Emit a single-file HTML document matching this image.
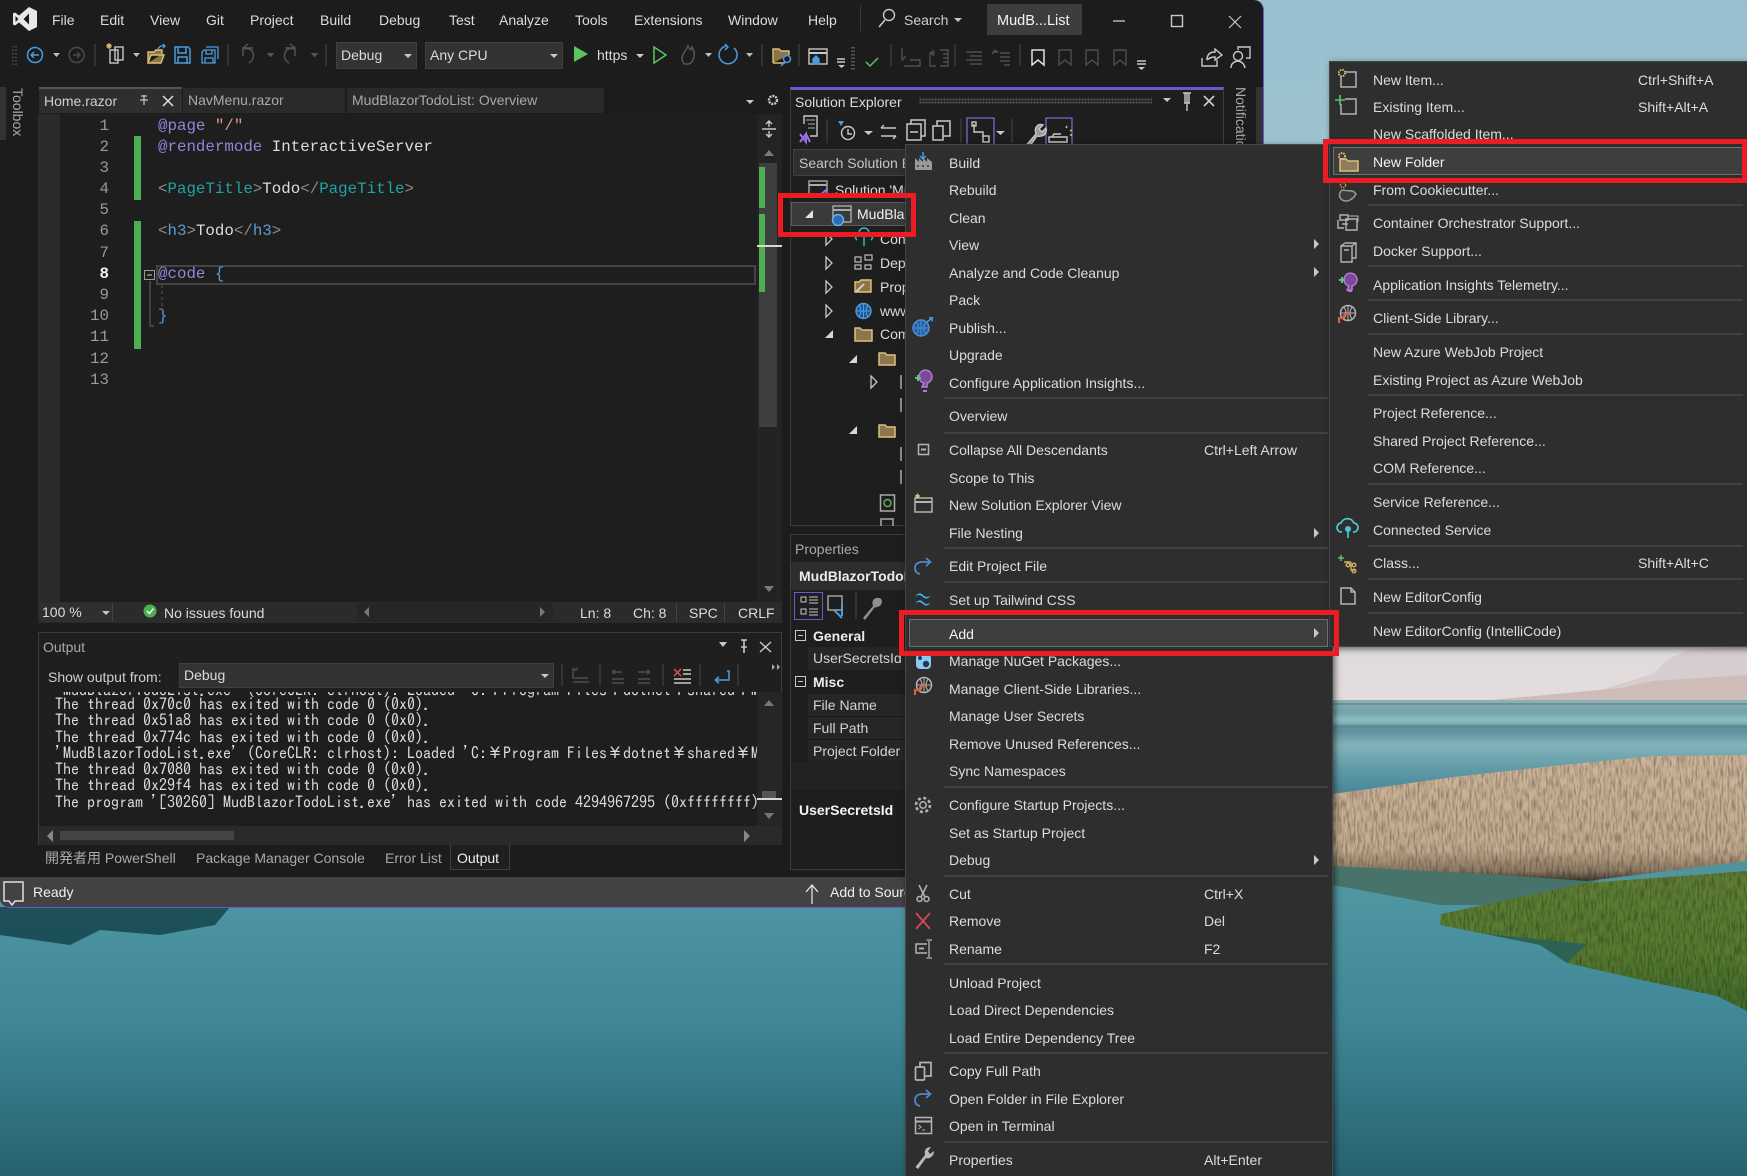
<!DOCTYPE html>
<html lang="en"><head><meta charset="utf-8"><title>Visual Studio</title>
<style>
html,body{margin:0;padding:0;width:1747px;height:1176px;overflow:hidden;background:#2a6a7c}
*{box-sizing:border-box}
#p{position:relative;width:1747px;height:1176px;overflow:hidden;font:14px "Liberation Sans","Noto Sans CJK JP",sans-serif;color:#dcdcdc}
.a{position:absolute}
.t{position:absolute;white-space:nowrap;line-height:18px;font-size:14px}
.g{color:#a9a9a9}
.b{font-weight:bold;color:#ececec}
.c{position:absolute;white-space:pre;font:15.8px/21px "Liberation Mono",monospace;color:#dcdcdc}
.n{position:absolute;right:0;width:30px;text-align:right;font:15.8px/21px "Liberation Mono",monospace;color:#9a9a9a}
.pu{color:#8f86dc}.st{color:#d69d85}.te{color:#1fa3a3}.br{color:#8a8a8a}.bl{color:#569cd6}
.o{position:absolute;left:0;white-space:pre;font:16px/16px "IPAGothic","Liberation Mono",monospace;color:#dcdcdc}
.sep{position:absolute;height:2px;background:#414141}
.m{position:absolute;background:#2e2e2e;border:1px solid #474747;box-shadow:2px 2px 6px rgba(0,0,0,.55)}
.hl{position:absolute;background:#3e3e3e;border:1.5px solid #6f6f6f}
.rb{position:absolute;border:solid #ec1c24;border-width:5px}
.ar{position:absolute;width:0;height:0;border-left:5px solid #c8c8c8;border-top:5px solid transparent;border-bottom:5px solid transparent}
.dn{position:absolute;width:0;height:0;border-top:4px solid #c8c8c8;border-left:4px solid transparent;border-right:4px solid transparent}
.v{position:absolute;width:1px;background:#3a3a3a}
.cb{position:absolute;background:#333;border:1px solid #3f3f3f}
</style></head><body><div id="p">

<svg class="a" style="left:0;top:0" width="1747" height="1176" viewBox="0 0 1747 1176">
<defs>
<linearGradient id="sk" x1="0" y1="0" x2="0" y2="1"><stop offset="0" stop-color="#97bfce"/><stop offset=".3" stop-color="#a0c4d1"/><stop offset=".8" stop-color="#d6d8da"/><stop offset="1" stop-color="#e4dcdc"/></linearGradient>
<linearGradient id="wb" x1="0" y1="0" x2="0" y2="1"><stop offset="0" stop-color="#8fb1b6"/><stop offset=".12" stop-color="#72a2ab"/><stop offset=".2" stop-color="#8ebfc1"/><stop offset=".3" stop-color="#5d8e9d"/><stop offset=".45" stop-color="#83b3b8"/><stop offset=".7" stop-color="#5f9aa6"/><stop offset="1" stop-color="#3f7f98"/></linearGradient>
<linearGradient id="wa" x1="0" y1="0" x2="0" y2="1"><stop offset="0" stop-color="#56868a"/><stop offset=".25" stop-color="#4f97a2"/><stop offset=".6" stop-color="#3f8797"/><stop offset="1" stop-color="#28626f"/></linearGradient>
<linearGradient id="be" x1="0" y1="0" x2="0" y2="1"><stop offset="0" stop-color="#cdb59a"/><stop offset=".75" stop-color="#c3ab8e"/><stop offset=".92" stop-color="#8c7a63"/><stop offset="1" stop-color="#3e3a2e"/></linearGradient>
<linearGradient id="gr" x1="0" y1="0" x2="0" y2="1"><stop offset="0" stop-color="#5f7f36"/><stop offset=".6" stop-color="#577a30"/><stop offset="1" stop-color="#3f6a2c"/></linearGradient>
<filter id="tx" x="0" y="0" width="100%" height="100%"><feTurbulence type="fractalNoise" baseFrequency=".5 .09" numOctaves="2" seed="4"/><feColorMatrix values="0 0 0 0 0  0 0 0 0 0  0 0 0 0 0  0 0 0 1.4 -.55"/><feComposite in2="SourceGraphic" operator="in"/></filter>
</defs>
<rect width="1747" height="702" fill="url(#sk)"/>
<path d="M1600 690 1653 674 1667 660 1687 650 1747 646V690Z" fill="#d8cdce"/>
<path d="M1470 702 1620 688 1653 681 1747 675V704H1470Z" fill="#cdbcb8"/>
<rect y="700" width="1747" height="100" fill="url(#wb)"/>
<rect y="703" width="1747" height="2" fill="#6f8f98"/><rect y="725" width="1747" height="3" fill="#5f8595" opacity=".8"/>
<rect y="790" width="1747" height="386" fill="url(#wa)"/>
<path d="M0 907H230L215 925 160 935 100 930 70 945 0 935Z" fill="#0e3a40" opacity=".75"/>
<path d="M1333 860 1600 880 1520 905 1440 905 1333 885Z" fill="#48736a"/>
<path id="bg1" d="M1333 794 1453 777 1553 766 1653 756 1747 755V861L1587 881 1487 874 1333 866Z" fill="url(#be)"/>
<path d="M1333 794 1453 777 1553 766 1653 756 1747 755V861L1587 881 1487 874 1333 866Z" fill="#5d4c38" filter="url(#tx)" opacity=".5"/>
<path d="M1441 914 1587 883 1747 871V1011L1717 996 1637 979 1567 963 1587 944 1487 934 1440 925Z" fill="url(#gr)"/>
<path d="M1441 914 1587 883 1747 871V1011L1717 996 1637 979 1567 963 1587 944 1487 934 1440 925Z" fill="#2c4a1c" filter="url(#tx)" opacity=".5"/>
<path d="M1445 926 1487 934 1587 944 1567 963 1540 945Z" fill="#27553f" opacity=".8"/>
</svg>

<!-- window -->
<div class="a" style="left:0;top:0;width:1264px;height:908px;background:#1c1c1d;border-right:1.5px solid #6a5ad0;border-bottom:1.5px solid #6a5ad0;border-radius:0 10px 0 10px;overflow:hidden">

<div class="a" style="left:0;top:877px;width:1264px;height:30px;background:#424242"></div>
</div>

<!-- menu bar -->
<div class="t" style="left:52px;top:11px">File</div><div class="t" style="left:100px;top:11px">Edit</div><div class="t" style="left:150px;top:11px">View</div><div class="t" style="left:206px;top:11px">Git</div><div class="t" style="left:250px;top:11px">Project</div><div class="t" style="left:320px;top:11px">Build</div><div class="t" style="left:379px;top:11px">Debug</div><div class="t" style="left:449px;top:11px">Test</div><div class="t" style="left:499px;top:11px">Analyze</div><div class="t" style="left:575px;top:11px">Tools</div><div class="t" style="left:634px;top:11px">Extensions</div><div class="t" style="left:728px;top:11px">Window</div><div class="t" style="left:808px;top:11px">Help</div>
<div class="v" style="left:860px;top:5px;height:26px"></div>
<div class="t" style="left:904px;top:11px;color:#cfcfcf">Search</div><div class="dn" style="left:954px;top:18px"></div>
<div class="a" style="left:987px;top:4px;width:95px;height:31px;background:#3d3d3d"></div>
<div class="t" style="left:997px;top:12px;color:#f4f4f4;font-size:14.5px">MudB...List</div>

<!-- toolbar combos -->
<div class="cb" style="left:336px;top:42px;width:81px;height:27px"></div><div class="t" style="left:341px;top:46px">Debug</div><div class="dn" style="left:404px;top:54px"></div>
<div class="cb" style="left:425px;top:42px;width:138px;height:27px"></div><div class="t" style="left:430px;top:46px">Any CPU</div><div class="dn" style="left:550px;top:54px"></div>
<div class="t" style="left:597px;top:46px">https</div><div class="dn" style="left:636px;top:54px"></div>

<!-- toolbox -->
<div class="a" style="left:0;top:87px;width:6px;height:53px;background:#333"></div>
<div class="t g" style="left:9px;top:88px;writing-mode:vertical-rl;line-height:18px">Toolbox</div>

<!-- doc tabs -->
<div class="a" style="left:39px;top:87px;width:143px;height:26px;background:#2e2e2e;border-top:2px solid #555"></div>
<div class="a" style="left:183px;top:88px;width:162px;height:25px;background:#2a2a2a"></div>
<div class="a" style="left:347px;top:88px;width:257px;height:25px;background:#2a2a2a"></div>
<div class="t" style="left:44px;top:92px;color:#cfcfcf">Home.razor</div>
<div class="t g" style="left:188px;top:91px">NavMenu.razor</div>
<div class="t g" style="left:352px;top:91px">MudBlazorTodoList: Overview</div>
<div class="dn" style="left:746px;top:100px"></div>

<!-- editor -->
<div class="a" style="left:38px;top:114px;width:744px;height:488px;background:#1e1e1e"></div>
<div class="a" style="left:38px;top:114px;width:22px;height:488px;background:#2b2b2b"></div>
<div class="a" style="left:757px;top:114px;width:25px;height:488px;background:#232323"></div>
<div class="a" style="left:759px;top:163px;width:18px;height:264px;background:#3e3e3e"></div>
<div class="a" style="left:759px;top:167px;width:6px;height:41px;background:#4caf50"></div>
<div class="a" style="left:759px;top:214px;width:6px;height:78px;background:#4caf50"></div>
<div class="a" style="left:757px;top:245px;width:25px;height:2px;background:#d8d8d8"></div>
<div class="a" style="left:134px;top:136px;width:7px;height:64px;background:#4caf50"></div>
<div class="a" style="left:134px;top:221px;width:7px;height:128px;background:#4caf50"></div>
<div class="a" style="left:156px;top:265px;width:600px;height:20px;border:2px solid #444"></div>
<div class="a" style="left:38px;top:115px;width:71px;height:280px">
<div class="n" style="top:1px">1</div><div class="n" style="top:22px">2</div><div class="n" style="top:43px">3</div><div class="n" style="top:64px">4</div><div class="n" style="top:85px">5</div><div class="n" style="top:106px">6</div><div class="n" style="top:128px">7</div><div class="n" style="top:149px;color:#f0f0f0;font-weight:bold">8</div><div class="n" style="top:170px">9</div><div class="n" style="top:191px">10</div><div class="n" style="top:212px">11</div><div class="n" style="top:234px">12</div><div class="n" style="top:255px">13</div>
</div>
<div class="c" style="left:158px;top:116px"><span class="pu">@page</span> <span class="st">"/"</span></div>
<div class="c" style="left:158px;top:137px"><span class="pu">@rendermode</span> InteractiveServer</div>
<div class="c" style="left:158px;top:179px"><span class="br">&lt;</span><span class="te">PageTitle</span><span class="br">&gt;</span>Todo<span class="br">&lt;/</span><span class="te">PageTitle</span><span class="br">&gt;</span></div>
<div class="c" style="left:158px;top:221px"><span class="br">&lt;</span><span class="bl">h3</span><span class="br">&gt;</span>Todo<span class="br">&lt;/</span><span class="bl">h3</span><span class="br">&gt;</span></div>
<div class="c" style="left:158px;top:264px"><span class="pu">@code</span> <span class="bl">{</span></div>
<div class="c" style="left:158px;top:306px"><span class="bl">}</span></div>

<!-- editor status -->
<div class="a" style="left:38px;top:602px;width:744px;height:21px;background:#2b2b2b"></div>
<div class="a" style="left:40px;top:603px;width:73px;height:19px;background:#2f2f2f;border-right:1px solid #444"></div>
<div class="a" style="left:357px;top:603px;width:196px;height:19px;background:#262626"></div>
<div class="a" style="left:676px;top:603px;width:1px;height:19px;background:#444"></div><div class="a" style="left:724px;top:603px;width:1px;height:19px;background:#444"></div>
<div class="t" style="left:42px;top:603px">100 %</div><div class="dn" style="left:102px;top:611px"></div>
<div class="t" style="left:164px;top:604px">No issues found</div>
<div class="t" style="left:580px;top:604px">Ln: 8</div><div class="t" style="left:633px;top:604px">Ch: 8</div><div class="t" style="left:689px;top:604px">SPC</div><div class="t" style="left:738px;top:604px">CRLF</div>

<!-- output -->
<div class="a" style="left:38px;top:632px;width:744px;height:213px;border:1px solid #3c3c3c;background:#1f1f1f"></div>
<div class="t g" style="left:43px;top:638px">Output</div>
<div class="t" style="left:48px;top:668px;color:#d0d0d0">Show output from:</div>
<div class="cb" style="left:179px;top:663px;width:375px;height:25px"></div>
<div class="t" style="left:184px;top:666px">Debug</div><div class="dn" style="left:541px;top:674px"></div>
<div class="a" style="left:39px;top:692px;width:718px;height:134px;background:#1e1e1e;overflow:hidden;color:#ddd">
<div class="o" style="left:16px;top:-10px">'MudBlazorTodoList.exe' (CoreCLR: clrhost): Loaded 'C:¥Program Files¥dotnet¥shared¥Micro</div>
<div class="o" style="left:16px;top:4px">The thread 0x70c0 has exited with code 0 (0x0).</div>
<div class="o" style="left:16px;top:20px">The thread 0x51a8 has exited with code 0 (0x0).</div>
<div class="o" style="left:16px;top:37px">The thread 0x774c has exited with code 0 (0x0).</div>
<div class="o" style="left:16px;top:53px">'MudBlazorTodoList.exe' (CoreCLR: clrhost): Loaded 'C:¥Program Files¥dotnet¥shared¥Micro</div>
<div class="o" style="left:16px;top:69px">The thread 0x7080 has exited with code 0 (0x0).</div>
<div class="o" style="left:16px;top:85px">The thread 0x29f4 has exited with code 0 (0x0).</div>
<div class="o" style="left:16px;top:102px">The program '[30260] MudBlazorTodoList.exe' has exited with code 4294967295 (0xffffffff).</div>
</div>
<div class="a" style="left:757px;top:692px;width:25px;height:134px;background:#262626"></div>
<div class="a" style="left:762px;top:791px;width:14px;height:8px;background:#555"></div>
<div class="a" style="left:757px;top:798px;width:25px;height:2px;background:#d8d8d8"></div>
<div class="a" style="left:39px;top:826px;width:743px;height:19px;background:#2a2a2a"></div>
<div class="a" style="left:60px;top:831px;width:174px;height:9px;background:#444"></div>
<div class="t g" style="left:45px;top:849px">開発者用 PowerShell</div>
<div class="t g" style="left:196px;top:849px">Package Manager Console</div>
<div class="t g" style="left:385px;top:849px">Error List</div>
<div class="a" style="left:450px;top:845px;width:60px;height:25px;border:1px solid #3f3f3f;border-top:0;background:#1f1f1f"></div>
<div class="t" style="left:457px;top:849px;color:#f0f0f0">Output</div>

<!-- status -->
<div class="t" style="left:33px;top:883px;color:#f0f0f0">Ready</div>
<div class="t" style="left:830px;top:883px;color:#f0f0f0">Add to Source Control</div>

<!-- solution explorer -->
<div class="a" style="left:790px;top:87px;width:434px;height:439px;border:1px solid #3c3c3c;border-top:3px solid #6a5ad0;background:#1e1e1e"></div>
<div class="t" style="left:795px;top:93px">Solution Explorer</div>
<div class="a" style="left:919px;top:98px;width:233px;height:6px;background:radial-gradient(circle,#555 1px,transparent 1.2px) 0 0/3px 3px"></div>
<div class="dn" style="left:1163px;top:98px"></div>
<div class="a" style="left:793px;top:149px;width:130px;height:27px;background:#2f2f2f;border:1px solid #404040"></div>
<div class="t" style="left:799px;top:154px;color:#c8c8c8">Search Solution Explorer</div>
<div class="t" style="left:835px;top:181px">Solution 'MudBlazorTodoList'</div>
<div class="a" style="left:791px;top:202px;width:130px;height:24px;background:#3a3a3a;border:1px solid #5c5c5c"></div>
<div class="t" style="left:857px;top:205px;color:#f4f4f4">MudBlazorTodoList</div>
<div class="t" style="left:880px;top:230px">Connected Services</div><div class="t" style="left:880px;top:254px">Dependencies</div><div class="t" style="left:880px;top:278px">Properties</div><div class="t" style="left:880px;top:302px">wwwroot</div><div class="t" style="left:880px;top:325px">Components</div>

<!-- properties -->
<div class="a" style="left:790px;top:534px;width:130px;height:336px;border:1px solid #3c3c3c;background:#1e1e1e"></div>
<div class="a" style="left:791px;top:562px;width:130px;height:28px;background:#2d2d2d"></div>
<div class="t g" style="left:795px;top:540px">Properties</div>
<div class="t b" style="left:799px;top:567px">MudBlazorTodoList</div>
<div class="a" style="left:794px;top:592px;width:29px;height:28px;border:1px solid #6a5ad0"></div>
<div class="a" style="left:808px;top:647px;width:115px;height:23px;background:#262626"></div>
<div class="a" style="left:808px;top:694px;width:115px;height:67px;background:#262626"></div>
<div class="a" style="left:808px;top:716px;width:115px;height:1px;background:#1a1a1a"></div><div class="a" style="left:808px;top:739px;width:115px;height:1px;background:#1a1a1a"></div>
<div class="a" style="left:791px;top:762px;width:130px;height:28px;background:#222"></div>
<div class="t b" style="left:813px;top:627px">General</div>
<div class="t" style="left:813px;top:649px;color:#d4d4d4">UserSecretsId</div>
<div class="t b" style="left:813px;top:673px">Misc</div>
<div class="t" style="left:813px;top:696px;color:#d4d4d4">File Name</div>
<div class="t" style="left:813px;top:719px;color:#d4d4d4">Full Path</div>
<div class="t" style="left:813px;top:742px;color:#d4d4d4">Project Folder</div>
<div class="t b" style="left:799px;top:801px;color:#f4f4f4">UserSecretsId</div>

<!-- notifications -->
<div class="t g" style="left:1232px;top:87px;writing-mode:vertical-rl">Notifications</div>
<div class="a" style="left:1256px;top:87px;width:7px;height:60px;background:#333"></div>

<!-- window level icons -->
<svg class="a" style="left:0;top:0" width="1747" height="1176" viewBox="0 0 1747 1176" fill="none" stroke="#c8c8c8" stroke-width="1.4">
<path fill="#e8e8e8" stroke="none" fill-rule="evenodd" d="M29 7 37 11V27L29 31 19 22.5 15 25.5 13 24.5V13.5L15 12.5 19 15.500ZM29 13.500 23.500 19 29 24.500ZM15.500 16V22L18.500 19Z"/>
<!-- search -->
<path d="M879 27 885 20" stroke-width="1.6"/><circle cx="889" cy="15" r="5.500"/>
<!-- win controls -->
<path d="M1113 21H1125" stroke-width="1.300"/><rect x="1171.500" y="15.500" width="11" height="11"/><path d="M1229 16 1241 28M1241 16 1229 28" stroke-width="1.200"/>
<!-- toolbar: grip -->
<path d="M13 46V66M16 46V66" stroke="#555" stroke-dasharray="1.500 2"/>
<circle cx="35" cy="55" r="7.500" stroke="#4a9be0" stroke-width="1.500"/><path d="M39 55H31M34 52 31 55 34 58" stroke="#4a9be0"/>
<circle cx="76.500" cy="55" r="7.500" stroke="#4a4a4a" stroke-width="1.500"/><path d="M73 55H80M77 52 80 55 77 58" stroke="#4a4a4a"/>
<path d="M53 53h7l-3.500 4z M133 53h7l-3.500 4z M267 53h7l-3.500 4z M311 53h7l-3.500 4z M705 53h7l-3.500 4z M746 53h7l-3.500 4z" fill="#bdbdbd" stroke="none"/>
<path d="M95 44V66M228 44V66M326 44V66M762 44V66M799 44V66M891 44V66M955 44V66M1020 44V66" stroke="#3c3c3c"/>
<rect x="110" y="50" width="8" height="13" /><rect x="115" y="47" width="8" height="13"/><path d="M106 46h6M109 43v6M107 44l4 4M111 44l-4 4" stroke="#e0c77a" stroke-width="1"/>
<path d="M148 63V52h6l2-2h6v4M148 63h13l3-8h-13z" stroke="#dcc07c" fill="#8c7444"/><path d="M158 49q2-4 6-3M163 44l2 2-2 2" stroke="#4a9be0"/>
<path d="M175 47H188L190 49V63H175ZM178 47V53H186V47M178 63V57H187V63" stroke="#4a9be0" stroke-width="1.500"/>
<path d="M204 50H215V63H202V52ZM206 47H218V59M206 50V54H212V50M205 63V58H213V63" stroke="#4a9be0" stroke-width="1.300"/>
<path d="M253 48 243 48V56M243 48 248 44M243 49q8-2 10 4t-4 10" stroke="#555" stroke-width="1.400"/>
<path d="M285 48H295V56M295 48 290 44M295 49q-8-2-10 4t4 10" stroke="#555" stroke-width="1.400"/>
<path d="M267 53h7l-3.500 4z M311 53h7l-3.500 4z" fill="#555" stroke="none"/>
<path d="M574 46 588 54 574 62Z" fill="#5cc45c" stroke="none"/>
<path d="M654 47 666 55 654 63Z" stroke="#5cc45c" stroke-width="1.500"/>
<path d="M684 64q-4-6 0-11 3-4 4-8 1 4 3 5 1-2 1-3 4 6 1 13-2 4-5 4z" stroke="#555" stroke-width="1.500"/>
<path d="M726 46a9 9 0 1 0 8 2M725 44l3 3-3 3" stroke="#4a9be0" stroke-width="1.500"/>
<path d="M773 63V49h6l2 2h8v4M773 63h12" stroke="#dcc07c" fill="#8c7444"/><circle cx="787" cy="59" r="3.500" stroke="#4a9be0" stroke-width="1.500"/><path d="M785 62 781 66" stroke="#4a9be0" stroke-width="1.500"/>
<rect x="809" y="49" width="18" height="15"/><path d="M809 53H827" stroke-width="2"/><path d="M813 63V59L816 56 819 59V64H813" stroke="#4a9be0" fill="#4a9be0"/>
<path d="M837 59h8M837 62h8" stroke-width="1.600"/><path d="M838 65h7l-3.500 3z" fill="#c8c8c8" stroke="none"/>
<path d="M853 47V70" stroke="#555" stroke-width="4" stroke-dasharray="1.500 2"/>
<path d="M866 62 870 66 878 58" stroke="#5cc45c" stroke-width="1.500"/>
<g stroke="#4e4e4e"><path d="M902 48V60L906 56 M910 60H920V66H904"/><path d="M930 53V66H936M930 53h5M934 50l-3 3 3 3M940 50h8v16h-8M943 54h5M943 58h5M943 62h5"/><path d="M966 52H982M970 56H982M966 60H982M970 64H982"/><path d="M994 52h4l-4-2 M992 54q2-4 6-2M1000 53H1010M1000 57H1010M1000 61H1010M1004 65H1010"/><path d="M1059 50H1071V65L1065 60 1059 65Z"/><path d="M1086 50H1098V65L1092 60 1086 65Z"/><path d="M1114 50H1126V65L1120 60 1114 65Z"/></g>
<path d="M1032 50H1044V65L1038 60 1032 65Z" stroke="#e0e0e0" stroke-width="1.500"/>
<path d="M1137 61h9M1137 64h9" stroke-width="1.600"/><path d="M1138 67h7l-3.500 3z" fill="#c8c8c8" stroke="none"/>
<path d="M1202 58V66H1217V60M1207 60q0-8 8-8V49L1222 55 1215 60V57q-5 0-8 3"/>
<circle cx="1238" cy="56" r="4.500"/><path d="M1231 68q0-6 7-7 6 1 7 7M1238 50V47H1250V58H1246"/>
<!-- doc tabs -->
<path d="M140 100H148M144 95V105M141 96H147" stroke-width="1.200"/><path d="M163 96 173 106M173 96 163 106" stroke-width="1.500" stroke="#e0e0e0"/>
<circle cx="773" cy="100" r="4" stroke-width="2.400" stroke-dasharray="2 1"/>
<path d="M762 129H776M769 122V127M769 131V136M766 124 769 121 772 124M766 134 769 137 772 134"/>
<path d="M764 156 769 150 774 156Z M764 586 769 592 774 586Z" fill="#7a7a7a" stroke="none"/>
<!-- outline -->
<rect x="144.500" y="270.500" width="10" height="9" stroke="#999" stroke-width="1"/><path d="M147 275H152" stroke="#ccc" stroke-width="1"/>
<path d="M150 281V326H154" stroke="#666" stroke-width="1"/><path d="M162 285V310" stroke="#555" stroke-width="1" stroke-dasharray="3 3"/>
<!-- status -->
<path d="M104 610h0" />
<circle cx="150" cy="611" r="6.500" fill="#4eb04e" stroke="none"/><path d="M147 611 149.500 613.500 153.500 608.500" stroke="#fff" stroke-width="1.400"/>
<path d="M369 607 364 612 369 617ZM540 607 545 612 540 617Z" fill="#777" stroke="none"/>
<!-- output -->
<path d="M719 642h8l-4 5z" fill="#c8c8c8" stroke="none"/>
<path d="M741 640H747M744 640V653M741 647H747" stroke-width="1.600"/><path d="M760 642 771 652M771 642 760 652" stroke-width="1.400"/>
<g stroke="#4e4e4e"><path d="M573 668V678H588M573 682H589M578 668 575 671M573 668l3 3"/><path d="M612 672H622M612 672l3-2M612 672l3 2M612 679H624M612 683H624"/><path d="M638 672H650M650 672l-3-2M650 672l-3 2M638 679H650M638 683H650"/></g>
<path d="M562 664V686M600 664V686M663 664V686M700 664V686M738 664V686" stroke="#3c3c3c"/>
<path d="M674 669 681 676M681 669 674 676" stroke="#e05050" stroke-width="1.500"/><path d="M683 670H691M683 674H691M674 679H691M674 683H691" stroke-width="1.500"/>
<path d="M727 671H729V680H715M715 680 719 677M715 680 719 683" stroke="#4a9be0" stroke-width="1.500"/>
<path d="M772 664 775 667 772 670ZM777 664 780 667 777 670Z" fill="#aaa" stroke="none"/>
<path d="M764 706 769 700 774 706ZM764 813 769 819 774 813Z" fill="#777" stroke="none"/>
<path d="M53 830 47 836 53 842ZM744 830 750 836 744 842Z" fill="#888" stroke="none"/>
<!-- status icons -->
<path d="M4 882H23V901H15L12 905 9 901H4Z" stroke-width="1.500" stroke="#e0e0e0"/>
<path d="M812 904V886M806 892 812 885 818 892" stroke="#e0e0e0" stroke-width="1.300"/>
<!-- SE header -->
<path d="M1183 93H1191M1187 93V111M1184 103H1190M1185 93V103M1189 93V103" stroke-width="1.400"/><path d="M1204 96 1214 106M1214 96 1204 106" stroke-width="1.700"/>
<!-- SE toolbar -->
<path d="M804 124V116H817V136H810" stroke="#c8c8c8"/><path d="M806 120H815M808 124H815M808 128H815" stroke="#aaa" stroke-width="1"/><path d="M800 142 806 134V142L800 134M806 134 810 142" stroke="#9a70e0" stroke-width="2"/>
<path d="M827 119V143M961 119V143M1012 119V143" stroke="#3c3c3c"/>
<path d="M838 121h6l-3 5z" fill="#4a9be0" stroke="none"/><circle cx="848" cy="133" r="6.500"/><path d="M848 129V134H852"/>
<path d="M864 131h9l-4.500 4z M996 131h9l-4.500 4z" fill="#c8c8c8" stroke="none"/>
<path d="M881 128H896M881 128l3-3M896 136H881M896 136l-3 3"/>
<rect x="907" y="124" width="14" height="16" stroke-width="1.500"/><path d="M911 124V120H925V136H921M910 132H918" stroke-width="1.500"/>
<rect x="933" y="126" width="10" height="14" stroke-width="1.500"/><path d="M937 126V121H950V136H943" stroke-width="1.500"/>
<rect x="967" y="118" width="27" height="27" stroke="#7a6fd8" stroke-width="1.200"/><rect x="1046" y="118" width="26" height="27" stroke="#7a6fd8" stroke-width="1.200"/>
<path d="M974 124V132H983V137" /><rect x="972" y="122" width="4" height="4"/><rect x="983" y="136" width="6" height="6"/>
<path d="M1024 148 1036 134q-2-6 2-9 3-1 5 0l-4 4 3 3 4-4q1 4-2 7-3 2-7 1L1027 150Z" stroke-width="1.400" fill="#999"/>
<path d="M1049 137H1067V142H1049ZM1052 137l2-3h7" stroke-width="1.400"/><path d="M1066 128l1-2M1070 131l2-1M1070 135h2" stroke="#e0c77a"/>
<!-- tree -->
<path d="M772 0" />
<path d="M826 233V245L832 239Z M826 257V269L832 263Z M826 281V293L832 287Z M826 305V317L832 311Z M871 376V388L877 382Z" stroke="#c8c8c8" stroke-width="1.300"/>
<path d="M833 330V338H825Z M857 355V363H849Z M857 426V434H849Z" fill="#d8d8d8" stroke="none"/>
<path d="M775 222V206L770 214Z" stroke="none"/>
<path d="M813 210V218H805Z" fill="#e0e0e0" stroke="none"/>
<rect x="809" y="181" width="18" height="16" stroke="#aaa"/><path d="M809 185H827" stroke="#aaa" stroke-width="2"/><path d="M818 197 826 190 828 197" stroke="#9a70e0" stroke-width="2"/>
<rect x="833" y="206" width="18" height="16" stroke="#aaa"/><path d="M833 210H851" stroke="#aaa" stroke-width="2"/><circle cx="838" cy="220" r="5.500" fill="#2b6cb5" stroke="#6ab0f0"/>
<path d="M857 240a4 4 0 0 1 2-7 5 5 0 0 1 10 0 4 4 0 0 1 2 7M864 237V246" stroke="#3fb4c6" stroke-width="1.500"/>
<path d="M855 257h6v5h-6zM865 255h7v5h-7zM855 265h6v4h-6zM865 265h6v4h-6z" stroke="#bbb" stroke-width="1.200"/>
<path d="M855 282h4l2-2h10v12h-16z" stroke="#e0c77a" fill="#8c7444"/><path d="M856 292 864 284" stroke="#ccc" stroke-width="2"/>
<circle cx="863.500" cy="311" r="7.500" stroke="#4a9be0" fill="#24578f"/><path d="M856 311H871M863.500 304V318M859 305Q863 311 859 317M868 305Q864 311 868 317" stroke="#4a9be0" stroke-width="1"/>
<path d="M855 341V328H860L862 330H872V341Z" stroke="#dcc07c" stroke-width="1.500" fill="#8c7650"/>
<path d="M879 365V353H885L887 355H895V365Z" stroke="#dcc07c" stroke-width="1.500" fill="#8c7650"/>
<path d="M879 437V425H885L887 427H895V437Z" stroke="#dcc07c" stroke-width="1.500" fill="#8c7650"/>
<path d="M901 375V389M901 398V412M901 447V461M901 470V484" stroke="#8a8a8a" stroke-width="2"/>
<rect x="880.500" y="495" width="14" height="16" stroke="#aaa" stroke-width="1.500"/><circle cx="887.500" cy="503" r="3.500" stroke="#5cb860"/>
<path d="M881 526V519H893V526" stroke="#aaa" stroke-width="1.500"/>
<!-- props -->
<path d="M801 597h5v5h-5zM801 609h5v5h-5zM809 597h9M809 600h9M809 603h9M809 609h9M809 612h9M809 615h9" stroke-width="1"/>
<rect x="828" y="596" width="14" height="14" stroke="#aaa"/><path d="M834 610l8 8M842 605V616" stroke="#4a9be0" stroke-width="2"/>
<path d="M856 591V619" stroke="#3c3c3c"/>
<path d="M863 618 873 606q-2-6 3-8 5-1 6 3 0 5-5 6-2 1-2 0L865 620Z" fill="#8f8f8f" stroke="none"/>
<rect x="795.500" y="630.500" width="10" height="10" stroke-width="1"/><path d="M798 635.500H803" stroke-width="1"/>
<rect x="795.500" y="676.500" width="10" height="10" stroke-width="1"/><path d="M798 681.500H803" stroke-width="1"/>
</svg>

<!-- menus -->
<div class="m" style="left:905px;top:144px;width:428px;height:1040px"></div>
<div class="m" style="left:1329px;top:61px;width:430px;height:586px"></div>

<div class="a" style="left:909px;top:619px;width:419px;height:28px;background:#3e3e3e;border:1.5px solid #6f6f6f"></div>
<div class="a" style="left:1333px;top:147px;width:410px;height:28px;background:#3e3e3e;border:1.5px solid #6f6f6f"></div>

<div class="t" style="left:949px;top:153.500px">Build</div>
<div class="t" style="left:949px;top:180.500px">Rebuild</div>
<div class="t" style="left:949px;top:208.500px">Clean</div>
<div class="t" style="left:949px;top:235.500px">View</div>
<div class="t" style="left:949px;top:263.500px">Analyze and Code Cleanup</div>
<div class="t" style="left:949px;top:290.500px">Pack</div>
<div class="t" style="left:949px;top:318.500px">Publish...</div>
<div class="t" style="left:949px;top:345.500px">Upgrade</div>
<div class="t" style="left:949px;top:373.500px">Configure Application Insights...</div>
<div class="sep" style="left:944px;top:397px;width:384px"></div>
<div class="t" style="left:949px;top:406.500px">Overview</div>
<div class="sep" style="left:944px;top:432px;width:384px"></div>
<div class="t" style="left:949px;top:440.500px">Collapse All Descendants</div><div class="t" style="left:1204px;top:440.500px">Ctrl+Left Arrow</div>
<div class="t" style="left:949px;top:468.500px">Scope to This</div>
<div class="t" style="left:949px;top:495.500px">New Solution Explorer View</div>
<div class="t" style="left:949px;top:523.500px">File Nesting</div>
<div class="sep" style="left:944px;top:547px;width:384px"></div>
<div class="t" style="left:949px;top:556.500px">Edit Project File</div>
<div class="sep" style="left:944px;top:581px;width:384px"></div>
<div class="t" style="left:949px;top:590.500px">Set up Tailwind CSS</div>
<div class="t" style="left:949px;top:624.500px;color:#f2f2f2">Add</div>
<div class="t" style="left:949px;top:652px">Manage NuGet Packages...</div>
<div class="t" style="left:949px;top:679.500px">Manage Client-Side Libraries...</div>
<div class="t" style="left:949px;top:707px">Manage User Secrets</div>
<div class="t" style="left:949px;top:734.500px">Remove Unused References...</div>
<div class="t" style="left:949px;top:762px">Sync Namespaces</div>
<div class="sep" style="left:944px;top:786px;width:384px"></div>
<div class="t" style="left:949px;top:795.500px">Configure Startup Projects...</div>
<div class="t" style="left:949px;top:823.500px">Set as Startup Project</div>
<div class="t" style="left:949px;top:850.500px">Debug</div>
<div class="sep" style="left:944px;top:875px;width:384px"></div>
<div class="t" style="left:949px;top:884.500px">Cut</div><div class="t" style="left:1204px;top:884.500px">Ctrl+X</div>
<div class="t" style="left:949px;top:911.500px">Remove</div><div class="t" style="left:1204px;top:911.500px">Del</div>
<div class="t" style="left:949px;top:939.500px">Rename</div><div class="t" style="left:1204px;top:939.500px">F2</div>
<div class="sep" style="left:944px;top:963px;width:384px"></div>
<div class="t" style="left:949px;top:973.500px">Unload Project</div>
<div class="t" style="left:949px;top:1000.500px">Load Direct Dependencies</div>
<div class="t" style="left:949px;top:1028.500px">Load Entire Dependency Tree</div>
<div class="sep" style="left:944px;top:1052px;width:384px"></div>
<div class="t" style="left:949px;top:1061.500px">Copy Full Path</div>
<div class="t" style="left:949px;top:1089.500px">Open Folder in File Explorer</div>
<div class="t" style="left:949px;top:1116.500px">Open in Terminal</div>
<div class="sep" style="left:944px;top:1141px;width:384px"></div>
<div class="t" style="left:949px;top:1150.500px">Properties</div><div class="t" style="left:1204px;top:1150.500px">Alt+Enter</div>
<div class="ar" style="left:1314px;top:239px"></div><div class="ar" style="left:1314px;top:267px"></div><div class="ar" style="left:1314px;top:528px"></div><div class="ar" style="left:1314px;top:628px"></div><div class="ar" style="left:1314px;top:855px"></div>

<div class="t" style="left:1373px;top:70.500px">New Item...</div><div class="t" style="left:1638px;top:70.500px">Ctrl+Shift+A</div>
<div class="t" style="left:1373px;top:97.500px">Existing Item...</div><div class="t" style="left:1638px;top:97.500px">Shift+Alt+A</div>
<div class="a" style="left:1330px;top:120px;width:416px;height:20px;overflow:hidden"><div class="t" style="left:43px;top:5px">New Scaffolded Item...</div></div>
<div class="t" style="left:1373px;top:152.500px;color:#f2f2f2">New Folder</div>
<div class="a" style="left:1330px;top:181px;width:416px;height:20px;overflow:hidden"><div class="t" style="left:43px;top:0">From Cookiecutter...</div></div>
<div class="sep" style="left:1368px;top:204px;width:375px"></div>
<div class="t" style="left:1373px;top:213.500px">Container Orchestrator Support...</div>
<div class="t" style="left:1373px;top:241.500px">Docker Support...</div>
<div class="sep" style="left:1368px;top:265px;width:375px"></div>
<div class="t" style="left:1373px;top:275.500px">Application Insights Telemetry...</div>
<div class="sep" style="left:1368px;top:299px;width:375px"></div>
<div class="t" style="left:1373px;top:308.500px">Client-Side Library...</div>
<div class="sep" style="left:1368px;top:333px;width:375px"></div>
<div class="t" style="left:1373px;top:342.500px">New Azure WebJob Project</div>
<div class="t" style="left:1373px;top:370.500px">Existing Project as Azure WebJob</div>
<div class="sep" style="left:1368px;top:394px;width:375px"></div>
<div class="t" style="left:1373px;top:403.500px">Project Reference...</div>
<div class="t" style="left:1373px;top:431.500px">Shared Project Reference...</div>
<div class="t" style="left:1373px;top:458.500px">COM Reference...</div>
<div class="sep" style="left:1368px;top:483px;width:375px"></div>
<div class="t" style="left:1373px;top:492.500px">Service Reference...</div>
<div class="t" style="left:1373px;top:520.500px">Connected Service</div>
<div class="sep" style="left:1368px;top:545px;width:375px"></div>
<div class="t" style="left:1373px;top:553.500px">Class...</div><div class="t" style="left:1638px;top:553.500px">Shift+Alt+C</div>
<div class="sep" style="left:1368px;top:578px;width:375px"></div>
<div class="t" style="left:1373px;top:587.500px">New EditorConfig</div>
<div class="sep" style="left:1368px;top:612px;width:375px"></div>
<div class="t" style="left:1373px;top:621.500px">New EditorConfig (IntelliCode)</div>

<!-- menu icons -->
<svg class="a" style="left:0;top:0" width="1747" height="1176" viewBox="0 0 1747 1176" fill="none" stroke="#b4b4b4" stroke-width="1.500">
<!-- build -->
<path d="M915 170V158L919 162V158L923 162V158L927 162V158L932 162V170Z" fill="#9a9a9a" stroke="none"/><path d="M923 152V159M920 156 923 159 926 156" stroke="#4a9be0"/><path d="M917 166h2M922 166h2M927 166h2" stroke="#2e2e2e"/>
<!-- publish -->
<circle cx="921" cy="328" r="8" stroke="#4a90d8" fill="#2c5f9e"/><path d="M913 328H929M921 320V336M916 322Q921 328 916 334M926 322Q921 328 926 334" stroke="#4a90d8" stroke-width="1"/><path d="M927 322 932 318M929 317.500 932.500 318 932 321.500" stroke="#4a9be0"/>
<!-- bulb -->
<path d="M925 384a6.500 6.500 0 1 1 3 0V388H923Z" transform="translate(-1 -1)" stroke="#b878d8" fill="#7a4a98"/><path d="M923 391H927" stroke="#b878d8" stroke-width="2"/><path d="M915 378H921M918 375V381" stroke="#5cc47c" stroke-width="2"/>
<!-- collapse -->
<rect x="918.500" y="444.500" width="10" height="10" stroke="#b4b4b4"/><path d="M921 449.500H926" stroke-width="2"/>
<!-- new view -->
<rect x="915" y="498" width="17" height="14"/><path d="M915 502H932" stroke-width="2"/><path d="M915 496h5M917.500 493.500v5M916 495l3 3M919 495l-3 3" stroke="#e0c77a" stroke-width="1.200"/>
<!-- edit -->
<path d="M930 562H921Q915 563 915 568T920 574M926 558 930.500 562 926 566" stroke="#4a88c8" stroke-width="1.800"/>
<!-- tailwind -->
<path d="M915 597Q919 591 923 595T931 595Q927 601 923 597T915 597ZM915 604Q919 598 923 602T931 602Q927 608 923 604T915 604Z" fill="#38bdf8" stroke="none"/>
<!-- nuget -->
<rect x="916" y="654" width="15" height="15" rx="4" fill="#8ccbf0" stroke="none"/><circle cx="920" cy="658" r="2" fill="#1e3a5a" stroke="none"/><circle cx="926" cy="664" r="3.200" fill="#1e3a5a" stroke="none"/>
<!-- client lib -->
<circle cx="924" cy="685" r="7.500"/><path d="M916.500 685H931.500M924 677.500V692.500M920 679Q924 685 920 691M928 679Q924 685 928 691" stroke-width="1"/><path d="M915 695V690H920Q919 686 924 686H926" stroke="#d8603f" stroke-width="2.200"/>
<circle cx="1348" cy="313" r="7.500"/><path d="M1340.500 313H1355.500M1348 305.500V320.500M1344 307Q1348 313 1344 319M1352 307Q1348 313 1352 319" stroke-width="1"/><path d="M1339 323V318H1344Q1343 314 1348 314H1350" stroke="#d8603f" stroke-width="2.200"/>
<!-- gear -->
<circle cx="923" cy="805" r="3.200"/><circle cx="923" cy="805" r="7" stroke-width="2.600" stroke-dasharray="3 2.500"/>
<!-- cut -->
<path d="M919 885 925 897M927 885 921 897" stroke-width="1.500"/><circle cx="919.500" cy="899" r="2.500"/><circle cx="926.500" cy="899" r="2.500"/>
<!-- remove -->
<path d="M916 913 930 929M930 913 916 929" stroke="#d8455a" stroke-width="1.800"/>
<!-- rename -->
<path d="M927 944H916V953H927" stroke-width="1.500"/><path d="M919 948.500H924" stroke-width="1.800"/><path d="M929 941V957M926.500 940H932M926.500 958H932" stroke-width="1.300"/>
<!-- copy -->
<rect x="915.500" y="1067" width="9" height="13" rx="1" stroke-width="1.700"/><path d="M920 1067V1062.500H931V1076H925" stroke-width="1.700"/>
<!-- open -->
<path d="M930 1094H921Q915 1095 915 1100T920 1106M926 1090 930.500 1094 926 1098" stroke="#4a88c8" stroke-width="1.800"/>
<!-- terminal -->
<rect x="915.500" y="1117.500" width="16" height="16"/><path d="M915.500 1121.500H931.500" stroke-width="2"/><path d="M918.500 1125 921 1127 918.500 1129M922 1130H925" stroke-width="1"/>
<!-- wrench -->
<path d="M915.500 1167 925 1155q-1-5 2-7 2-1 4-1l-3 4 2 3 4-3q0 4-3 6-2 2-5 1L918 1169Z" fill="#bbb" stroke="none"/>

<!-- submenu icons -->
<rect x="1341" y="72" width="15" height="15" stroke="#b4b4b4"/><circle cx="1342" cy="73" r="3.200" stroke="#e0c77a" stroke-width="1.800" stroke-dasharray="1.500 1" fill="#2e2e2e"/>
<rect x="1341" y="99" width="15" height="15"/><rect x="1335" y="94" width="10" height="10" fill="#2e2e2e" stroke="none"/><path d="M1335 100H1345M1340 95V105" stroke="#5cc47c" stroke-width="1.600"/>
<path d="M1340 171V159H1346L1348 161H1358V171Z" stroke="#dcc07c" fill="#8f7c58"/><circle cx="1342" cy="156" r="3" stroke="#e0c77a" stroke-width="1.800" stroke-dasharray="1.500 1"/>
<path d="M1342 190q-5 5 0 10 4 2 8 0 4-2 6-6-3-4-6-3z" stroke="#999" fill="#3a3a3a"/><circle cx="1343" cy="185" r="2.600" stroke="#e0a030" stroke-width="1.400" stroke-dasharray="1.500 1"/>
<path d="M1340 215h8v5h-8zM1346 219H1357V230H1346ZM1342 224H1348M1338 220V228H1344" stroke-width="1.400"/><path d="M1349 216H1358V222" stroke-width="1"/>
<path d="M1341 246H1352V262H1341ZM1345 243H1356V258H1352M1344 250H1349M1341 246 1345 243M1352 246 1356 243" stroke-width="1.400"/>
<path d="M1351 288a6.500 6.500 0 1 1 3 0V292H1349Z" transform="translate(-2 -2)" stroke="#b878d8" fill="#7a4a98"/><path d="M1348 291H1352" stroke="#b878d8" stroke-width="2"/><path d="M1339 280H1345M1342 277V283" stroke="#5cc47c" stroke-width="2"/>
<path d="M1342 532a4.500 4.500 0 0 1-1-9 7 7 0 0 1 13 0 4.500 4.500 0 0 1-1 9M1348 527V538" stroke="#4ec4d4" stroke-width="1.700"/><circle cx="1348" cy="529" r="3" fill="#4ec4d4" stroke="none"/>
<path d="M1338 558H1344M1341 555V561" stroke="#5cc47c" stroke-width="1.500"/><path d="M1344 562H1351M1351 562V570H1356" stroke="#d0b060" stroke-width="1.400"/><circle cx="1348" cy="565" r="1.800" stroke="#d0b060"/><circle cx="1354" cy="565" r="1.800" stroke="#d0b060"/><circle cx="1354" cy="571" r="1.800" stroke="#d0b060"/>
<path d="M1341 588H1351L1355 592V604H1341ZM1351 588V592H1355" stroke="#b4b4b4"/>
</svg>

<!-- red boxes -->
<div class="rb" style="left:778px;top:193px;width:138px;height:44px"></div>
<div class="rb" style="left:899px;top:610px;width:440px;height:46px"></div>
<div class="rb" style="left:1323px;top:139px;width:424px;height:44px"></div>
</div></body></html>
